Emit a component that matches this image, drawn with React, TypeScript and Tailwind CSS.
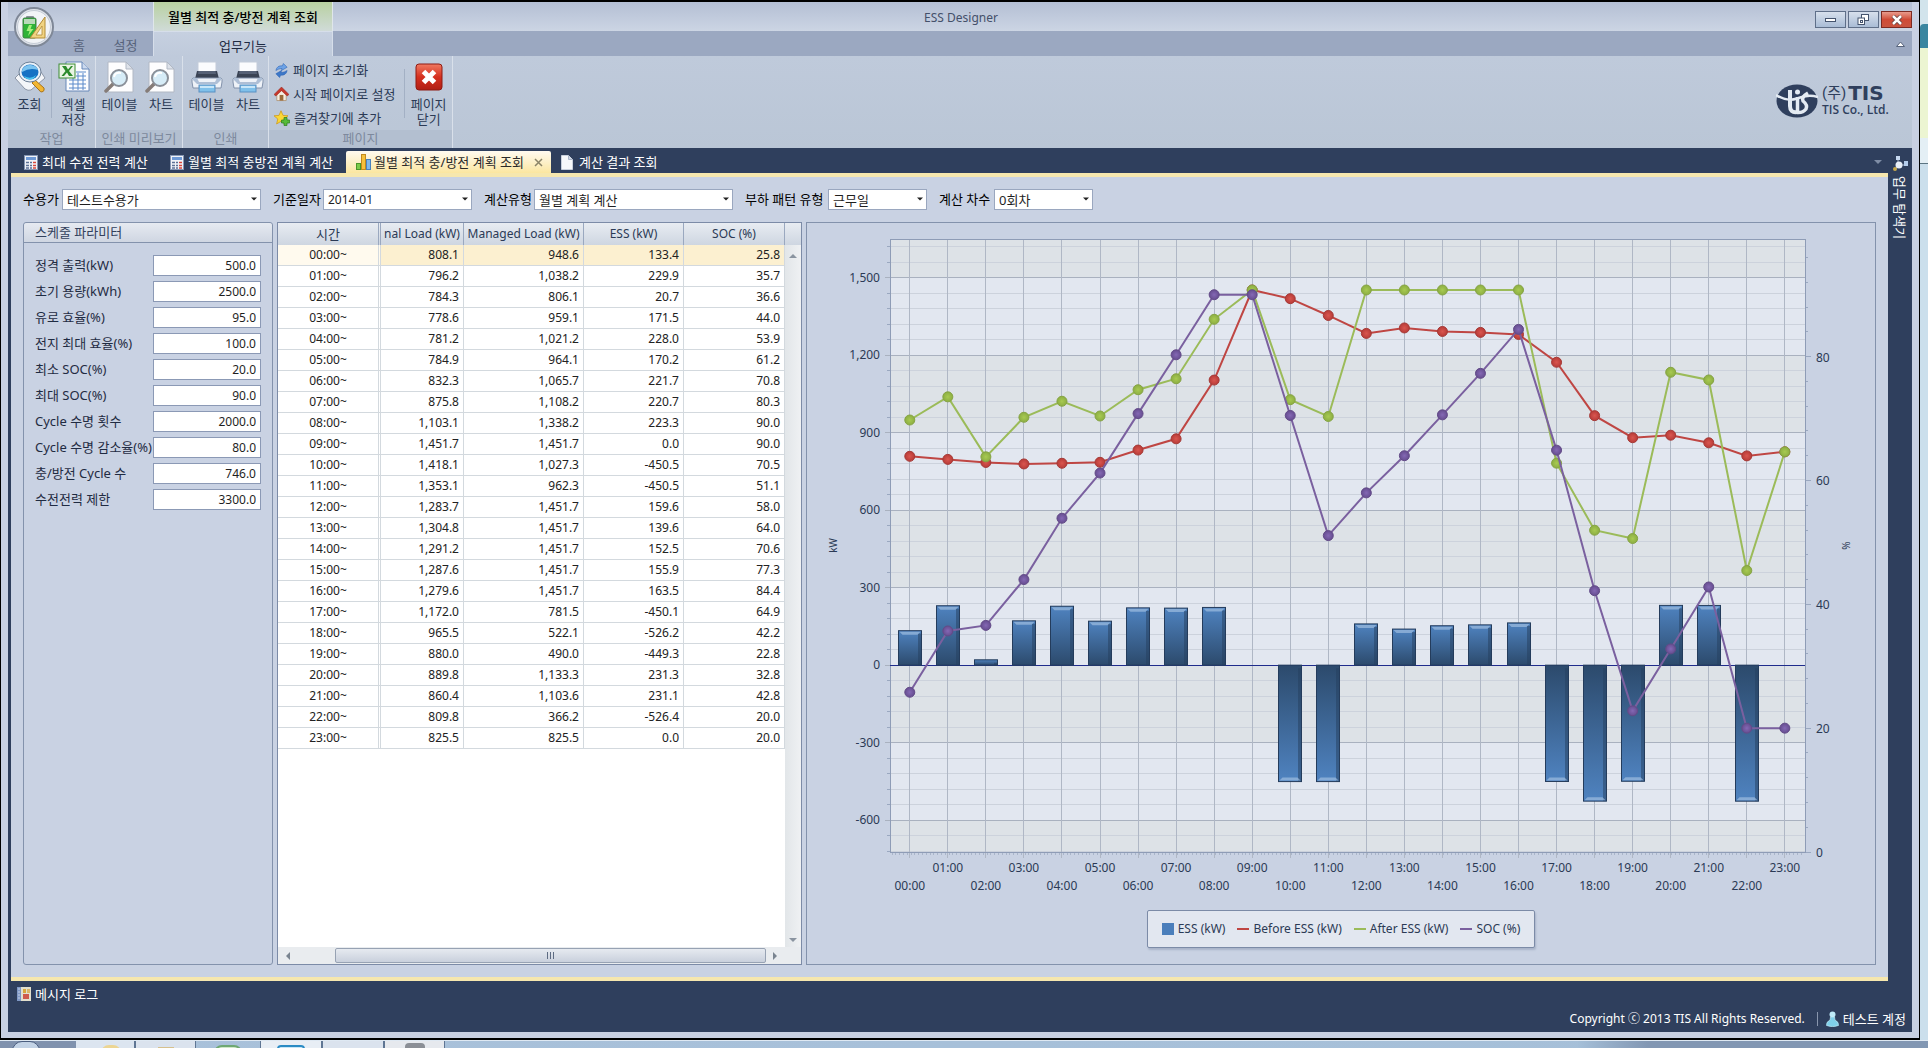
import { useLayoutEffect, useRef, useState, type ReactNode } from "react";

type Row = [string, number, number, number, number];

const rows: Row[] = [
  ["00:00", 808.1, 948.6, 133.4, 25.8],
  ["01:00", 796.2, 1038.2, 229.9, 35.7],
  ["02:00", 784.3, 806.1, 20.7, 36.6],
  ["03:00", 778.6, 959.1, 171.5, 44.0],
  ["04:00", 781.2, 1021.2, 228.0, 53.9],
  ["05:00", 784.9, 964.1, 170.2, 61.2],
  ["06:00", 832.3, 1065.7, 221.7, 70.8],
  ["07:00", 875.8, 1108.2, 220.7, 80.3],
  ["08:00", 1103.1, 1338.2, 223.3, 90.0],
  ["09:00", 1451.7, 1451.7, 0.0, 90.0],
  ["10:00", 1418.1, 1027.3, -450.5, 70.5],
  ["11:00", 1353.1, 962.3, -450.5, 51.1],
  ["12:00", 1283.7, 1451.7, 159.6, 58.0],
  ["13:00", 1304.8, 1451.7, 139.6, 64.0],
  ["14:00", 1291.2, 1451.7, 152.5, 70.6],
  ["15:00", 1287.6, 1451.7, 155.9, 77.3],
  ["16:00", 1279.6, 1451.7, 163.5, 84.4],
  ["17:00", 1172.0, 781.5, -450.1, 64.9],
  ["18:00", 965.5, 522.1, -526.2, 42.2],
  ["19:00", 880.0, 490.0, -449.3, 22.8],
  ["20:00", 889.8, 1133.3, 231.3, 32.8],
  ["21:00", 860.4, 1103.6, 231.1, 42.8],
  ["22:00", 809.8, 366.2, -526.4, 20.0],
  ["23:00", 825.5, 825.5, 0.0, 20.0],
];

const params: [string, string][] = [
  ["정격 출력(kW)", "500.0"],
  ["초기 용량(kWh)", "2500.0"],
  ["유로 효율(%)", "95.0"],
  ["전지 최대 효율(%)", "100.0"],
  ["최소 SOC(%)", "20.0"],
  ["최대 SOC(%)", "90.0"],
  ["Cycle 수명 횟수", "2000.0"],
  ["Cycle 수명 감소율(%)", "80.0"],
  ["충/방전 Cycle 수", "746.0"],
  ["수전전력 제한", "3300.0"],
];

const fmt = (v: number) =>
  v.toLocaleString("en-US", { minimumFractionDigits: 1, maximumFractionDigits: 1 });

/* ---------- icons ---------- */

function SearchIcon() {
  return (
    <svg width="32" height="32" viewBox="0 0 32 32" aria-hidden="true">
      <path d="M1 17 L7 11 L27 11 L31 17 L17 29 Q14 30 11 28 Z" fill="#f4f6f9" stroke="#8d96a6" />
      <path d="M21 19 L30 27 Q31 30 28 31 Q26 31 25 29 L18 22 Z" fill="#f2b632" stroke="#a8731a" />
      <ellipse cx="16" cy="11" rx="11" ry="10" fill="#e9f1f8" stroke="#6c7f96" />
      <ellipse cx="16" cy="11" rx="8.5" ry="7.5" fill="#1571c4" />
      <path d="M8 9 Q11 3.500 17 4 Q23 5 24 9 Q16 6 8 11Z" fill="#7cc4f0" />
      <path d="M10 15 Q17 19 22 14 Q20 18.500 16 18.500 Q12 18.500 10 15Z" fill="#49c4ee" />
    </svg>
  );
}

function ExcelIcon() {
  return (
    <svg width="32" height="32" viewBox="0 0 32 32" aria-hidden="true">
      <path d="M8 1 H24 L31 8 V30 H8 Z" fill="#fbfcfe" stroke="#6787b8" />
      <path d="M24 1 V8 H31" fill="#cbd9ee" stroke="#6787b8" />
      <path d="M11 19H28M11 23H28M11 27H28M15 12V29M20 12V29M25 12V29M18 11H28M18 15H28" stroke="#5b8acb" />
      <rect x="1" y="3" width="16" height="14" fill="#eaf5e4" stroke="#3d8b34" />
      <path d="M4 5 H8 L10 8.500 L13 5 H15 L11 10 L15 15 H11 L9 11.500 L6 15 H3.500 L7.500 10 Z" fill="#2b8a2b" />
    </svg>
  );
}

function PreviewIcon() {
  return (
    <svg width="32" height="32" viewBox="0 0 32 32" aria-hidden="true">
      <path d="M4 1 H22 L29 8 V31 H4 Z" fill="#fdfdfe" stroke="#b1b8c4" />
      <path d="M22 1 V8 H29 Z" fill="#dde2ea" stroke="#b1b8c4" />
      <path d="M9 23 L2 30" stroke="#857c78" strokeWidth="3.500" strokeLinecap="round" />
      <circle cx="15" cy="17" r="8" fill="#d6ecf7" stroke="#8a9099" strokeWidth="2" />
      <path d="M10 16 Q11 11 17 12" fill="none" stroke="#fff" strokeWidth="2" />
    </svg>
  );
}

function PrinterIcon() {
  return (
    <svg width="32" height="32" viewBox="0 0 32 32" aria-hidden="true">
      <rect x="7" y="1" width="18" height="13" fill="#fbfcfe" stroke="#c3cbd9" />
      <path d="M6 10 H26 L28 18 H4 Z" fill="#3a4354" />
      <path d="M7.500 10 H24.500 L25 13 H7 Z" fill="#566176" />
      <path d="M2 17 H30 Q31.500 18 31 21 L30 27 H2 L1 21 Q.5 18 2 17Z" fill="#eef2f8" stroke="#8292ab" />
      <path d="M2 17 H6 L8 21 H24 L26 17 H30 V19 L26 23 H6 L2 19Z" fill="#aebfd6" />
      <rect x="8" y="24" width="16" height="7" fill="#7fc0ea" stroke="#5a90c2" />
      <rect x="9" y="25" width="14" height="2" fill="#c8e6f8" />
    </svg>
  );
}

function RefreshIcon() {
  return (
    <svg width="15" height="15" viewBox="0 0 16 16" aria-hidden="true">
      <path d="M2 8 Q3 2.500 9 3 L10 .5 L14 4.500 L8 8 L8.500 5.800 Q5 6 2 8Z" fill="#6ea3e6" stroke="#2a62b4" strokeWidth=".6" />
      <path d="M14 8 Q13 13.500 7 13 L6 15.500 L2 11.500 L8 8 L7.500 10.200 Q11 10 14 8Z" fill="#3d78c8" stroke="#2a62b4" strokeWidth=".6" />
    </svg>
  );
}

function HomeIcon() {
  return (
    <svg width="15" height="16" viewBox="0 0 16 16" aria-hidden="true">
      <path d="M3 7 V15 H13 V7 L8 2Z" fill="#f6eee0" stroke="#a98e6c" strokeWidth=".8" />
      <path d="M0 8.500 L8 .5 L16 8.500 L14 10 L8 4.500 L2 10Z" fill="#c8382c" stroke="#8c1f18" strokeWidth=".5" />
      <rect x="6" y="9" width="4" height="6" fill="#9a6b3a" />
    </svg>
  );
}

function StarIcon() {
  return (
    <svg width="16" height="16" viewBox="0 0 16 16" aria-hidden="true">
      <path d="M7 .8 L9 5.400 L14 5.800 L10.200 9 L11.400 14 L7 11.300 L2.600 14 L3.800 9 L0 5.800 L5 5.400Z" fill="#fbd836" stroke="#cf9a1a" strokeWidth=".8" />
      <path d="M10 7.500 H13 V10 H15.600 V13 H13 V15.500 H10 V13 H7.500 V10 H10Z" fill="#57bb3a" stroke="#2b7d1c" strokeWidth=".7" />
    </svg>
  );
}

function CloseBoxIcon() {
  return (
    <svg width="28" height="28" viewBox="0 0 28 28" aria-hidden="true">
      <defs>
        <linearGradient id="red" x1="0" y1="0" x2="0" y2="1">
          <stop offset="0" stopColor="#f07a62" />
          <stop offset=".5" stopColor="#d5301f" />
          <stop offset="1" stopColor="#b01f14" />
        </linearGradient>
      </defs>
      <rect x="1" y="1" width="26" height="26" rx="3" fill="url(#red)" stroke="#8f1a12" />
      <path d="M8.500 8.500 L19.500 19.500 M19.500 8.500 L8.500 19.500" stroke="#fff" strokeWidth="5" />
    </svg>
  );
}

function CalcIcon() {
  return (
    <svg width="14" height="15" viewBox="0 0 14 15" aria-hidden="true">
      <rect x=".5" y=".5" width="13" height="14" fill="#f0f3f8" stroke="#8697b4" />
      <rect x="2" y="2" width="10" height="3" fill="#6f9ad6" />
      <path d="M2 7.500H5M2 10.500H5M2 13H5" stroke="#5c7296" strokeWidth="1.500" />
      <path d="M6 7.500H8M6 10.500H8M6 13H8" stroke="#5c7296" strokeWidth="1.500" />
      <path d="M9 7.500H12M9 10.500H12M9 13H12" stroke="#d7483d" strokeWidth="1.500" />
    </svg>
  );
}

function BarsIcon() {
  return (
    <svg width="16" height="16" viewBox="0 0 16 16" aria-hidden="true">
      <rect x=".5" y="9.500" width="4" height="6" fill="#7ccb4a" stroke="#4a962a" />
      <rect x="5.500" y=".5" width="4" height="15" fill="#f6c13c" stroke="#c48a1c" />
      <rect x="10.500" y="5.500" width="4" height="10" fill="#7fb8ec" stroke="#4a82bd" />
    </svg>
  );
}

function PageIcon() {
  return (
    <svg width="12" height="15" viewBox="0 0 12 15" aria-hidden="true">
      <path d="M.5 .5 H7.500 L11.500 4.500 V14.500 H.5Z" fill="#f6f8fb" stroke="#c8d0dd" />
      <path d="M7.500 .5 V4.500 H11.500" fill="#cdd6e4" stroke="#a9b5c9" />
    </svg>
  );
}

function LogIcon() {
  return (
    <svg width="14" height="14" viewBox="0 0 14 14" aria-hidden="true">
      <rect width="4" height="14" fill="#7e97c4" />
      <path d="M1 2H3M1 5H3M1 8H3M1 11H3" stroke="#c2cee4" />
      <rect x="4" width="10" height="14" fill="#e2dfcd" />
      <rect x="6" y="2" width="3" height="4" fill="#d8a63c" />
      <rect x="10" y="2" width="3" height="4" fill="#d9b66a" />
      <rect x="6" y="7" width="6" height="5" fill="#cf5a4c" />
    </svg>
  );
}

function UserIcon() {
  return (
    <svg width="13" height="16" viewBox="0 0 13 16" aria-hidden="true">
      <circle cx="6.500" cy="3.500" r="3" fill="#bfeaf8" />
      <path d="M4.500 6 H8.500 L9 9 Q13 11 12.500 14.500 Q6.500 17 .5 14.500 Q0 11 4 9Z" fill="#7fd0ea" stroke="#c9f0fa" strokeWidth=".6" />
    </svg>
  );
}

function DockIcon() {
  return (
    <svg width="16" height="16" viewBox="0 0 16 16" aria-hidden="true">
      <path d="M6 9 L3 14 M6 9 V3 M7 9 H13" stroke="#aab6ca" />
      <rect x="4" y="0" width="4" height="4" fill="#c6d8f0" />
      <rect x="12" y="5" width="4" height="5" fill="#b5cdec" />
      <circle cx="7" cy="9" r="3.500" fill="#e8eff8" />
      <circle cx="3" cy="13" r="2" fill="#c7a94c" />
    </svg>
  );
}

function OrbIcon() {
  return (
    <svg width="40" height="40" viewBox="0 0 40 40" aria-hidden="true">
      <circle cx="20" cy="20" r="19" fill="#dfe3ea" stroke="#7f8897" strokeWidth="2" />
      <circle cx="20" cy="20" r="16.500" fill="#f2f4f7" stroke="#c5ccd6" />
      <rect x="12" y="9" width="8" height="3" rx="1" fill="#8b9299" />
      <rect x="9" y="11" width="13" height="20" rx="1.500" fill="#2fb338" stroke="#3f7d45" />
      <rect x="10" y="12" width="11" height="5" fill="#b9d9ba" />
      <path d="M15 18 L12.500 24 H15.500 L14 29 L19.500 22 H16.500 L18 18Z" fill="#a4ef7c" />
      <path d="M31 10 V31 H16 Z" fill="#f1d382" stroke="#b28c36" />
      <path d="M28 19 V28 H22 Z" fill="#fbf6e4" stroke="#b28c36" strokeWidth=".8" />
    </svg>
  );
}

function TisMark() {
  return (
    <svg width="42" height="34" viewBox="0 0 42 34" aria-hidden="true">
      <ellipse cx="21" cy="17" rx="20.500" ry="16.500" fill="#2f3f5d" />
      <path d="M0 11 Q11 18 21 14.500 Q32 10 42 13" fill="none" stroke="#e4ebf3" strokeWidth="2.500" />
      <path d="M14 6 V22 Q14 29 21 28" fill="none" stroke="#e4ebf3" strokeWidth="4" />
      <circle cx="21.500" cy="8" r="2.500" fill="#e4ebf3" />
      <path d="M21.500 13 V29" stroke="#e4ebf3" strokeWidth="3.500" />
      <path d="M32 9 Q25 13 27 17 Q32 21 30 25 Q27 29 21 28.500" fill="none" stroke="#e4ebf3" strokeWidth="3.500" />
    </svg>
  );
}

function Triangle({ dir, className = "" }: { dir: "up" | "down" | "left" | "right"; className?: string }) {
  const d = { up: "M0 5 L4 1 L8 5Z", down: "M0 1 L4 5 L8 1Z", left: "M5 0 L1 4 L5 8Z", right: "M1 0 L5 4 L1 8Z" }[dir];
  const flat = dir === "up" || dir === "down";
  return (
    <svg className={className} width={flat ? 8 : 6} height={flat ? 6 : 8} viewBox={flat ? "0 0 8 6" : "0 0 6 8"} aria-hidden="true">
      <path d={d} fill="currentColor" />
    </svg>
  );
}

/* ---------- ribbon ---------- */

function BigButton({ icon, label, className = "" }: { icon: ReactNode; label: string; className?: string }) {
  return (
    <button className={`flex flex-col items-center text-[13px] leading-[15px] whitespace-pre-line text-[#2b3a55] ${className}`}>
      <span className="flex h-8 items-center">{icon}</span>
      <span className="mt-1">{label}</span>
    </button>
  );
}

function Group({ caption, className = "", children }: { caption: string; className?: string; children: ReactNode }) {
  return (
    <div className={`flex flex-col border-r border-[#d9e0ea] ${className}`}>
      <div className="flex flex-1 pt-[5px]">{children}</div>
      <div className="h-[18px] bg-[#b3bfd0] text-center text-[13px] leading-[17px] text-[#7d899d]">{caption}</div>
    </div>
  );
}

function Ribbon() {
  return (
    <div className="flex h-[92px] shrink-0 bg-linear-to-b from-[#bfcadb] to-[#bac6d6]">
      <Group caption="작업" className="w-[88px]">
        <BigButton icon={<SearchIcon />} label="조회" className="w-[43px]" />
        <span className="mt-2 mb-3 w-px bg-[#a3b0c4]" />
        <BigButton icon={<ExcelIcon />} label={"엑셀\n저장"} className="w-[43px]" />
      </Group>
      <Group caption="인쇄 미리보기" className="w-[87px]">
        <BigButton icon={<PreviewIcon />} label="테이블" className="w-[47px]" />
        <BigButton icon={<PreviewIcon />} label="차트" className="w-[36px]" />
      </Group>
      <Group caption="인쇄" className="w-[86px]">
        <BigButton icon={<PrinterIcon />} label="테이블" className="w-[47px]" />
        <BigButton icon={<PrinterIcon />} label="차트" className="w-[36px]" />
      </Group>
      <Group caption="페이지" className="w-[184px]">
        <div className="flex w-[134px] flex-col gap-1.5 pl-[5px] text-[13px] leading-[18px] text-[#2b3a55]">
          <button className="flex h-[18px] items-center gap-1 whitespace-nowrap"><RefreshIcon />페이지 초기화</button>
          <button className="flex h-[18px] items-center gap-1 whitespace-nowrap"><HomeIcon />시작 페이지로 설정</button>
          <button className="flex h-[18px] items-center gap-1 whitespace-nowrap"><StarIcon />즐겨찾기에 추가</button>
        </div>
        <span className="mt-2 mb-3 ml-0.5 w-px bg-[#a3b0c4]" />
        <BigButton icon={<CloseBoxIcon />} label={"페이지\n닫기"} className="w-[47px]" />
      </Group>
      <div className="mt-6 mr-5 ml-auto flex items-start gap-1 pt-1 text-[#2f3f5d]">
        <TisMark />
        <div className="w-[70px] whitespace-nowrap">
          <div className="flex items-center gap-0.5 font-[Roboto,'Noto_Sans_CJK_KR',sans-serif] text-[15px] leading-[18px]">
            <span>(주)</span>
            <span className="font-['DejaVu_Sans'] text-[20px] font-bold">TIS</span>
          </div>
          <div className="mt-0.5 font-['Open_Sans'] text-[12px] leading-3 font-semibold">TIS Co., Ltd.</div>
        </div>
      </div>
    </div>
  );
}

function TitleBar() {
  return (
    <header className="relative shrink-0">
      <div className="flex h-[29px] bg-linear-to-b from-[#b4bfd4] to-[#ccd5e4]">
        <div className="ml-[145px] w-[180px] border-x border-[#dfe6ea] bg-linear-to-b from-[#b8d0a0] to-[#d0dbd8] pt-1.5 text-center text-[13px] leading-[18px] font-medium text-black">
          월별 최적 충/방전 계획 조회
        </div>
        <div className="flex-1 pt-2 pr-[226px] text-center text-[12px] leading-4 text-[#44506a]">ESS Designer</div>
        <div className="flex gap-0.5 pt-[9px]">
          <button aria-label="최소화" className="flex h-[17px] w-[31px] items-center justify-center border border-[#5f6f89] bg-linear-to-b from-[#d7e0ec] to-[#a9bcd6]">
            <svg width="12" height="6" viewBox="0 0 12 6"><rect x=".5" y="1.500" width="10" height="3" fill="#fff" stroke="#45546e" /></svg>
          </button>
          <button aria-label="이전 크기로" className="flex h-[17px] w-[31px] items-center justify-center border border-[#5f6f89] bg-linear-to-b from-[#d7e0ec] to-[#a9bcd6]">
            <svg width="13" height="12" viewBox="0 0 13 12"><rect x="4.500" y=".5" width="7" height="6" fill="#fff" stroke="#45546e" /><rect x="1" y="4" width="6.500" height="6.500" fill="#fff" stroke="#45546e" /><rect x="3.500" y="6.500" width="2" height="2" fill="none" stroke="#45546e" /></svg>
          </button>
          <button aria-label="닫기" className="flex h-[17px] w-[31px] items-center justify-center border border-[#7d2a22] bg-linear-to-b from-[#e89a8c] via-[#cf4a36] to-[#c9543f]">
            <svg width="12" height="10" viewBox="0 0 12 10"><path d="M2 1 L10 9 M10 1 L2 9" stroke="#5a3a3a" strokeWidth="4" /><path d="M2 1 L10 9 M10 1 L2 9" stroke="#fff" strokeWidth="2.500" /></svg>
          </button>
        </div>
      </div>
      <nav className="flex h-[25px] bg-[#9ba8c1] text-[13px] leading-[28px] text-[#56627a]">
        <button className="ml-[61px] h-[25px] w-5">홈</button>
        <button className="ml-5 h-[25px] w-[33px]">설정</button>
        <button className="ml-[11px] h-[25px] w-[180px] border-x border-t border-[#d6deea] bg-linear-to-b from-[#c6d0e0] to-[#bfcadb] text-[#1e2a42]">업무기능</button>
        <button aria-label="리본 최소화" className="mr-1.5 ml-auto">
          <svg width="11" height="8" viewBox="0 0 11 8"><path d="M1.500 6.500 L5.500 2 L9.500 6.500Z" fill="#fff" stroke="#56627a" /></svg>
        </button>
      </nav>
      <button aria-label="응용 프로그램 메뉴" className="absolute top-[5px] left-1.5">
        <OrbIcon />
      </button>
    </header>
  );
}

function DocTabs() {
  return (
    <div className="flex h-[25px] shrink-0 items-end pl-2 text-[13px] leading-[20px] whitespace-nowrap text-white">
      <button className="flex h-[22px] w-[146px] items-center gap-1 pl-2"><CalcIcon />최대 수전 전력 계산</button>
      <button className="flex h-[22px] w-[184px] items-center gap-1 pl-2"><CalcIcon />월별 최적 충방전 계획 계산</button>
      <div className="flex h-[22px] w-[205px] items-center rounded-t-xs bg-linear-to-b from-[#fffaf0] to-[#fbe6a0] pr-2 pl-2.5 text-[#2a2a2a]">
        <button className="flex items-center gap-0.5"><BarsIcon />월별 최적 충/방전 계획 조회</button>
        <button aria-label="탭 닫기" className="ml-auto">
          <svg width="9" height="9" viewBox="0 0 9 9"><path d="M1 1 L8 8 M8 1 L1 8" stroke="#8b8468" strokeWidth="1.500" /></svg>
        </button>
      </div>
      <button className="flex h-[22px] items-center gap-1.5 pl-2.5"><PageIcon />계산 결과 조회</button>
      <button aria-label="탭 목록" className="mr-1.5 mb-2 ml-auto text-[#7f8da6]"><Triangle dir="down" /></button>
    </div>
  );
}

/* ---------- filters ---------- */

function Filter({ id, label, value, labelClass, boxClass }: { id: string; label: string; value: string; labelClass: string; boxClass: string }) {
  return (
    <div className="flex h-[21px] items-center">
      <label htmlFor={id} className={`text-[13px] leading-[21px] whitespace-nowrap ${labelClass}`}>{label}</label>
      <div className={`relative h-[21px] ${boxClass}`}>
        <select id={id} className="block h-[21px] w-full appearance-none border border-[#9aa7bf] bg-white pl-1 leading-[18px] text-[#1f1f1f]">
          <option>{value}</option>
        </select>
        <Triangle dir="down" className="pointer-events-none absolute top-[7px] right-1 h-1.5 w-1.5 text-[#222]" />
      </div>
    </div>
  );
}

function FilterBar() {
  return (
    <div className="flex gap-3 pt-3 pl-3">
      <Filter id="site" label="수용가" value="테스트수용가" labelClass="w-[39px]" boxClass="w-[199px] text-[13px]" />
      <Filter id="month" label="기준일자" value="2014-01" labelClass="w-[50px]" boxClass="w-[149px] text-[12px]" />
      <Filter id="kind" label="계산유형" value="월별 계획 계산" labelClass="w-[50px]" boxClass="w-[199px] text-[13px]" />
      <Filter id="pattern" label="부하 패턴 유형" value="근무일" labelClass="w-[83px]" boxClass="w-[99px] text-[13px]" />
      <Filter id="round" label="계산 차수" value="0회차" labelClass="w-[55px]" boxClass="w-[99px] text-[13px]" />
    </div>
  );
}

/* ---------- left panel ---------- */

function ParamPanel() {
  return (
    <section className="w-[250px] shrink-0 rounded-[3px] border border-[#8392ac]">
      <h2 className="h-5 rounded-t-[3px] border-b border-[#8392ac] bg-linear-to-b from-[#e6eaf1] to-[#cfd6e2] pl-[11px] text-[13px] leading-[19px] text-[#33415c]">
        스케줄 파라미터
      </h2>
      <div className="flex flex-col gap-[5px] pt-3 pr-[11px] pl-[11px]">
        {params.map(([label, value], i) => (
          <div key={label} className="flex items-center justify-between">
            <label htmlFor={`p${i}`} className="text-[13px] leading-[21px] whitespace-nowrap text-[#1f2b42]">{label}</label>
            <input
              id={`p${i}`}
              defaultValue={value}
              className="h-[21px] w-[108px] shrink-0 border border-[#8b99b5] bg-white pr-1 text-right text-[12px] text-[#1f1f1f]"
            />
          </div>
        ))}
      </div>
    </section>
  );
}

/* ---------- table ---------- */

function DataGrid() {
  const th = "h-[22px] border-r border-[#9aa8bf] p-0 font-normal whitespace-nowrap";
  const td = "h-[21px] border-r border-b border-[#d3d9de] p-0 pr-1 text-right";
  return (
    <section className="flex w-[525px] shrink-0 flex-col border border-[#7c8ba7] bg-white">
      <div className="flex min-h-0 flex-1">
        <div className="w-[507px]">
          <table className="w-full table-fixed border-separate border-spacing-0 text-[12px] leading-[18px] text-[#222]">
            <colgroup>
              <col className="w-[103px]" />
              <col className="w-[83px]" />
              <col className="w-[120px]" />
              <col className="w-[100px]" />
              <col />
            </colgroup>
            <thead className="bg-linear-to-b from-[#e8ecf2] to-[#ced6e1] text-[#2b3a55]">
              <tr>
                <th className="h-[22px] border-r-3 border-double border-[#9aa8bf] p-0 text-[13px] font-normal">시간</th>
                <th className={`${th} text-center`}>nal Load (kW)</th>
                <th className={th}>Managed Load (kW)</th>
                <th className={th}>ESS (kW)</th>
                <th className={th}>SOC (%)</th>
              </tr>
            </thead>
            <tbody>
              {rows.map(([t, a, b, c, d], i) => (
                <tr key={t} className={i === 0 ? "bg-[#fcf0d0]" : ""}>
                  <td className={`h-[21px] border-r-3 border-b border-[#d3d9de] p-0 text-center [border-right-style:double] ${i === 0 ? "bg-[#fffaee]" : ""}`}>{t}~</td>
                  <td className={td}>{fmt(a)}</td>
                  <td className={td}>{fmt(b)}</td>
                  <td className={td}>{fmt(c)}</td>
                  <td className={td}>{fmt(d)}</td>
                </tr>
              ))}
            </tbody>
          </table>
        </div>
        <div className="flex flex-1 flex-col items-center bg-linear-to-r from-[#e2e6e9] to-[#eff1f3] text-[#8a94a0]">
          <div className="h-[22px] w-full shrink-0 bg-linear-to-b from-[#e8ecf2] to-[#ced6e1]" />
          <Triangle dir="up" className="mt-2" />
          <Triangle dir="down" className="mt-auto mb-1" />
        </div>
      </div>
      <div className="flex h-[17px] shrink-0 items-center bg-[#e9ecef] px-[7px] text-[#7a8490]">
        <Triangle dir="left" />
        <div className="mr-1.5 ml-11 flex h-[15px] flex-1 items-center justify-center gap-0.5 rounded-xs border border-[#97a2b3] bg-linear-to-b from-[#e6eaf0] to-[#c9d0dc]">
          <span className="h-[7px] w-px bg-[#5d6b82]" />
          <span className="h-[7px] w-px bg-[#5d6b82]" />
          <span className="h-[7px] w-px bg-[#5d6b82]" />
        </div>
        <Triangle dir="right" className="mr-4" />
      </div>
    </section>
  );
}

/* ---------- chart ---------- */

function Chart() {
  const box = useRef<HTMLDivElement>(null);
  const [size, setSize] = useState({ w: 1067, h: 687 });

  useLayoutEffect(() => {
    const el = box.current;
    if (!el) return;
    const measure = () => setSize({ w: el.clientWidth, h: el.clientHeight });
    measure();
    const ro = new ResizeObserver(measure);
    ro.observe(el);
    return () => ro.disconnect();
  }, []);

  const left = 83;
  const right = size.w - 70;
  const top = 16;
  const bottom = size.h - 58;
  const plotW = right - left;
  const plotH = bottom - top;
  const step = plotW / 24.05;
  const x = (i: number) => left + step * (i + 0.52);
  const y = (v: number) => bottom - ((v + 723) / 2372) * plotH;
  const y2 = (v: number) => bottom - (v / 99) * plotH;

  const majors = [-600, -300, 0, 300, 600, 900, 1200, 1500];
  const minors: number[] = [];
  for (let v = -720; v <= 1640; v += 60) minors.push(v);
  const minors2: number[] = [];
  for (let v = 0; v < 99; v += 4) minors2.push(v);
  const line = (f: (r: Row) => number) => rows.map((r, i) => `${x(i)},${f(r)}`).join(" ");

  const series = [
    { id: "before", color: "#bf4643", dot: "url(#dotRed)", edge: "#a53a37", f: (r: Row) => y(r[1]) },
    { id: "after", color: "#9bbb59", dot: "url(#dotGreen)", edge: "#86a444", f: (r: Row) => y(r[2]) },
    { id: "soc", color: "#7a609f", dot: "url(#dotPurple)", edge: "#634b88", f: (r: Row) => y2(r[4]) },
  ];

  return (
    <div ref={box} className="min-h-0 flex-1 overflow-hidden">
      <svg width={size.w} height={size.h} className="block text-[12px]" role="img" aria-label="ESS 충/방전 차트">
        <defs>
          <linearGradient id="barUp" x1="0" y1="0" x2="0" y2="1">
            <stop offset="0" stopColor="#4f83c0" />
            <stop offset="1" stopColor="#2c4a6c" />
          </linearGradient>
          <linearGradient id="barDown" x1="0" y1="0" x2="0" y2="1">
            <stop offset="0" stopColor="#2c4a6c" />
            <stop offset="1" stopColor="#4f83c0" />
          </linearGradient>
          <radialGradient id="dotRed"><stop offset="0" stopColor="#d9564f" /><stop offset="1" stopColor="#b83b38" /></radialGradient>
          <radialGradient id="dotGreen"><stop offset="0" stopColor="#a8ca52" /><stop offset="1" stopColor="#8cae42" /></radialGradient>
          <radialGradient id="dotPurple"><stop offset="0" stopColor="#8468b4" /><stop offset="1" stopColor="#664d90" /></radialGradient>
        </defs>

        <rect x={left} y={top} width={plotW} height={plotH} fill="#dde2e7" />
        {[-600, 0, 600, 1200].map((v) => (
          <rect key={v} x={left} y={y(v + 300)} width={plotW} height={y(v) - y(v + 300)} fill="#e2e7f0" />
        ))}
        <g shapeRendering="crispEdges">
          {minors.map((v) => (
            <g key={v}>
              <line x1={left} x2={right} y1={y(v)} y2={y(v)} stroke="#ccd2dc" />
              <line x1={left - 3} x2={left} y1={y(v)} y2={y(v)} stroke="#9aa8c0" />
            </g>
          ))}
          {majors.map((v) => (
            <line key={v} x1={left - 5} x2={right} y1={y(v)} y2={y(v)} stroke="#a9b1bf" />
          ))}
          {rows.map((r, i) => (
            <line key={r[0]} x1={x(i)} x2={x(i)} y1={top} y2={bottom + 6} stroke="#afb7c5" />
          ))}
          {Array.from({ length: 240 }, (_, i) => (
            <line key={i} x1={left + 2 + (i * step) / 10} x2={left + 2 + (i * step) / 10} y1={bottom} y2={bottom + 3} stroke="#a9b5c9" />
          ))}
          {minors2.map((v) => (
            <line key={v} x1={right} x2={right + (v % 20 ? 3 : 6)} y1={y2(v)} y2={y2(v)} stroke="#9aa8c0" />
          ))}
          <rect x={left} y={top} width={plotW} height={plotH} fill="none" stroke="#8e9cb6" />
          <line x1={left} x2={right} y1={y(0)} y2={y(0)} stroke="#1f2c8c" />
        </g>

        {rows.map((r, i) => {
          const v = r[3];
          if (v === 0) return null;
          const yt = Math.min(y(v), y(0));
          const h = Math.abs(y(v) - y(0));
          const bx = Math.round(x(i)) - 11.5;
          const gy = v > 0 ? yt + 1 : yt + h - 5;
          return (
            <g key={r[0]}>
              <rect x={bx} y={yt} width="23" height={h} fill={v > 0 ? "url(#barUp)" : "url(#barDown)"} stroke="#243c5c" />
              <path d={`M${bx + 21} ${yt + 3} V${yt + h}`} stroke="#26405f" strokeWidth="3" opacity=".5" />
              {h > 6 && (
                <path
                  d={v > 0 ? `M${bx + 1} ${gy} h21 l-3 3 h-15Z` : `M${bx + 1} ${gy + 4} h21 l-3 -3 h-15Z`}
                  fill="#a4c1e2"
                  opacity=".65"
                />
              )}
            </g>
          );
        })}

        {series.map((s) => (
          <g key={s.id}>
            <polyline points={line(s.f)} fill="none" stroke={s.color} strokeWidth="2" />
            {rows.map((r, i) => (
              <circle key={r[0]} cx={x(i)} cy={s.f(r)} r="5" fill={s.dot} stroke={s.edge} />
            ))}
          </g>
        ))}

        <g fill="#2b3a55">
          {majors.map((v) => (
            <text key={v} x={left - 10} y={y(v) + 4} textAnchor="end">{v.toLocaleString("en-US")}</text>
          ))}
          {[0, 20, 40, 60, 80].map((v) => (
            <text key={v} x={right + 11} y={y2(v) + 5}>{v}</text>
          ))}
          {rows.map((r, i) => (
            <text key={r[0]} x={x(i)} y={bottom + (i % 2 ? 20 : 38)} textAnchor="middle">{r[0]}</text>
          ))}
          <text transform={`translate(30 ${(top + bottom) / 2}) rotate(-90)`} textAnchor="middle" className="text-[10px]">kW</text>
          <text transform={`translate(${size.w - 25} ${(top + bottom) / 2}) rotate(-90)`} textAnchor="middle" className="text-[10px]">%</text>
        </g>
      </svg>
    </div>
  );
}

function LegendItem({ swatch, label }: { swatch: string; label: string }) {
  return (
    <span className="flex items-center gap-1">
      <span className={`w-3 ${swatch}`} />
      {label}
    </span>
  );
}

function ChartPanel() {
  return (
    <section className="flex min-w-0 flex-1 flex-col border border-[#8392ac]">
      <Chart />
      <div className="mx-auto mb-4 flex h-[38px] shrink-0 items-center gap-3 rounded-xs border border-[#7c8ba7] bg-[#e2e7f0] px-[14px] text-[12px] whitespace-nowrap text-[#2b3a55] shadow-[1px_2px_2px_#a9b4c9]">
        <LegendItem swatch="h-3 bg-[#4a7ebb]" label="ESS (kW)" />
        <LegendItem swatch="h-0.5 bg-[#bf4643]" label="Before ESS (kW)" />
        <LegendItem swatch="h-0.5 bg-[#9bbb59]" label="After ESS (kW)" />
        <LegendItem swatch="h-0.5 bg-[#7a609f]" label="SOC (%)" />
      </div>
    </section>
  );
}

/* ---------- surroundings of the window ---------- */

function Taskbar() {
  return (
    <div className="flex h-2 shrink-0 overflow-hidden border-t border-[#dfe9f3] bg-linear-to-r from-[#a9c1da] to-[#a5bfd8]">
      <div className="flex w-[76px] justify-center bg-[#8092ae]">
        <span className="mr-6 h-5 w-7 rounded-full border border-[#4b5e80] bg-[#c3d3e6]" />
      </div>
      <span className="flex w-[60px] justify-center border-r-2 border-[#5f7694] bg-[#dce5f0]"><span className="mt-1 ml-3 h-4 w-5 rounded-full bg-[#ecd593]" /></span>
      <span className="flex w-[60px] justify-center border-r border-[#5f7694] bg-[#dbe3ee]"><span className="mt-1.5 h-4 w-4 bg-[#d6c08d]" /></span>
      <span className="flex w-[65px] justify-center border-r border-[#5f7694]"><span className="mt-1 h-4 w-7 rounded-t-lg border-2 border-[#6fa873] bg-[#cfe8c8]" /></span>
      <span className="flex w-[62px] justify-center border-r-2 border-[#5f7694] bg-[#e8eef5]"><span className="mt-1 h-4 w-7 rounded-t border-2 border-[#2b8bc4] bg-[#c9e6f6]" /></span>
      <span className="w-[62px] border-r-2 border-[#5f7694] bg-[#dbe3ee]" />
      <span className="flex w-[60px] justify-center border-r border-[#5f7694] bg-[#e6e9ee]"><span className="mt-0.5 h-4 w-5 rounded-t bg-[#8b8f96]" /></span>
      <span className="ml-auto w-[350px] bg-linear-to-r from-[#a5bfd8] via-[#8297b3] via-20% to-[#8297b3]" />
    </div>
  );
}

function NeighbourWindow() {
  return (
    <div className="flex w-2 shrink-0 flex-col bg-[#d2e4ec]">
      <span className="mt-6 h-6 w-full shrink-0 rounded-tl bg-[#3a86a0]" />
      <span className="h-[90px] w-full shrink-0 bg-[#ecf5d2]" />
      <span className="h-[26px] w-full shrink-0 border-b border-[#5b7482] bg-[#e4eff5]" />
      <span className="w-full flex-1 bg-[#cbdfec]" />
    </div>
  );
}

export default function App() {
  return (
    <div className="flex h-screen flex-col overflow-hidden font-['Noto_Sans','Noto_Sans_CJK_KR',sans-serif]">
      <div className="flex min-h-0 flex-1">
        <div className="flex min-w-0 flex-1 flex-col border-x border-t-2 border-b-2 border-black bg-[#c8d0e2] px-[7px] pb-[6px]">
          <TitleBar />
          <Ribbon />
          <div className="flex min-h-0 flex-1 bg-[#2f3f5d]">
            <div className="flex min-w-0 flex-1 flex-col">
              <DocTabs />
              <main className="ml-[3px] flex min-h-0 flex-1 flex-col border-y-4 border-[#f6e7ae] bg-[#c9d2e3] pb-3">
                <FilterBar />
                <div className="mt-3 flex min-h-0 flex-1 gap-1 pr-3 pl-3">
                  <ParamPanel />
                  <DataGrid />
                  <ChartPanel />
                </div>
              </main>
            </div>
            <aside className="w-6 shrink-0 pt-2">
              <button className="flex w-6 flex-col items-center gap-1 text-[13px] text-white">
                <DockIcon />
                <span className="leading-4 whitespace-nowrap [text-orientation:sideways] [writing-mode:vertical-rl]">업무 탐색기</span>
              </button>
            </aside>
          </div>
          <footer className="flex h-[51px] shrink-0 flex-col justify-between bg-[#2f3f5d] pt-[5px] pr-1.5 pb-[5px] text-white">
            <button className="ml-[9px] flex items-center gap-1 self-start text-[13px] leading-4"><LogIcon />메시지 로그</button>
            <div className="flex items-center justify-end text-[12px] leading-4">
              <span>Copyright ⓒ 2013 TIS All Rights Reserved.</span>
              <span className="mr-2 ml-3 h-3.5 w-px bg-[#8996ad]" />
              <button className="flex items-center gap-1 text-[13px] leading-4"><UserIcon />테스트 계정</button>
            </div>
          </footer>
        </div>
        <NeighbourWindow />
      </div>
      <Taskbar />
    </div>
  );
}
